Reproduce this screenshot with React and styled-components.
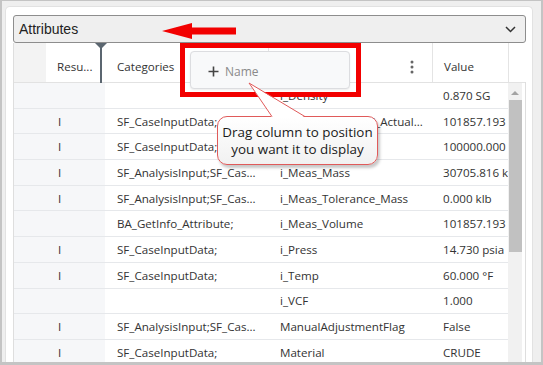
import React from "react";
import styled, { createGlobalStyle } from "styled-components";

const Global = createGlobalStyle`
  html, body { margin: 0; padding: 0; background: #efefef; }
  body { font-family: "Open Sans", "Noto Sans", sans-serif; }
  * { box-sizing: border-box; }
`;

const Frame = styled.div`
  position: relative;
  width: 543px;
  height: 365px;
  overflow: hidden;
  background: #efefef;
  border-style: solid;
  border-color: #c4c4c4;
  border-width: 1px 2px 3px 2px;
  padding: 5px 8px 0 3px;
`;

const Card = styled.div`
  background: #fff;
  border: 1px solid #e2e2e2;
  border-bottom: none;
  border-radius: 5px 5px 0 0;
  padding: 8px 6px 0 7px;
  height: 400px;
`;

const Select = styled.div`
  height: 28px;
  display: flex;
  align-items: center;
  justify-content: space-between;
  background: #efefef;
  border: 1px solid #8d8d8d;
  border-radius: 3px;
  padding: 0 9px 0 5px;
  font-family: "Liberation Sans", Arial, sans-serif;
  font-size: 14px;
  color: #222;
`;

const Grid = styled.div`
  border-left: 1px solid #dedede;
  border-right: 1px solid #dedede;
  font-size: 11.6px;
  color: #333;
`;

const COLS = "32px 59px 163px 164px 76px";

const HeaderRow = styled.div`
  position: relative;
  display: grid;
  grid-template-columns: ${COLS} 17px;
  height: 40px;
  border-bottom: 1px solid #e2e2e2;
`;

const HeadCell = styled.div`
  display: flex;
  align-items: center;
  padding: 8px ${(p) => (p.$menu ? "18px" : "8px")} 0 ${(p) => p.$pad || 11}px;
  justify-content: ${(p) => (p.$menu ? "flex-end" : "flex-start")};
  background: ${(p) => (p.$gray ? "#f3f3f3" : "#fff")};
  border-left: ${(p) => (p.$line ? "1px solid #e4e4e4" : "none")};
  white-space: nowrap;
  overflow: hidden;
  color: #333;
`;

const DragMark = styled.div`
  position: absolute;
  left: 86px;
  top: 0;
  width: 2px;
  height: 40px;
  background: #5b6670;
  &::before {
    content: "";
    position: absolute;
    left: -5px;
    top: 0;
    border-left: 6px solid transparent;
    border-right: 6px solid transparent;
    border-top: 6px solid #5b6670;
  }
`;

const Body = styled.div`
  display: flex;
`;

const Rows = styled.div`
  width: 494px;
`;

const Row = styled.div`
  display: grid;
  grid-template-columns: ${COLS};
  height: 25.7px;
  border-bottom: 1px solid #e6e8eb;
`;

const Cell = styled.div`
  display: flex;
  align-items: center;
  padding: 0 0 0 ${(p) => p.$pad || 12}px;
  background: ${(p) => (p.$gray ? "#f6f7f9" : "#fff")};
  white-space: nowrap;
  overflow: hidden;
`;

const Scroll = styled.div`
  position: relative;
  width: 14px;
  background: #f1f1f1;
  height: 290px;
`;

const UpArrow = styled.div`
  position: absolute;
  left: 3px;
  top: 8px;
  border-left: 4px solid transparent;
  border-right: 4px solid transparent;
  border-bottom: 4px solid #a3a3a3;
`;

const Thumb = styled.div`
  position: absolute;
  left: 1px;
  right: 0;
  top: 17px;
  height: 152px;
  background: #c1c1c1;
`;

const Gap = styled.div`
  width: 3px;
  background: #fff;
`;

const RedBox = styled.div`
  position: absolute;
  left: 178px;
  top: 42px;
  width: 181px;
  height: 54px;
  border: 5px solid #f20000;
`;

const Ghost = styled.div`
  position: absolute;
  left: 188px;
  top: 50px;
  width: 160px;
  height: 38px;
  background: #f8f9fa;
  border: 1px solid #dcdde0;
  border-radius: 4px;
  box-shadow: 0 1px 2px rgba(0, 0, 0, 0.08);
  display: flex;
  align-items: center;
  gap: 6px;
  padding: 2px 0 0 17px;
  font-size: 12px;
  color: #8a8a8a;
`;

const Callout = styled.div`
  position: absolute;
  left: 215px;
  top: 115px;
  width: 161px;
  height: 49px;
  border: 1px solid #e05a5a;
  border-radius: 10px;
  background: linear-gradient(#ffffff, #f1f1f1);
  box-shadow: 2px 3px 3px rgba(0, 0, 0, 0.22);
  display: flex;
  align-items: center;
  justify-content: center;
  text-align: center;
  font-size: 13.4px;
  line-height: 17px;
  color: #1a1a1a;
`;

const Tail = styled.svg`
  position: absolute;
  left: 243px;
  top: 80px;
  overflow: visible;
`;

const Arrow = styled.svg`
  position: absolute;
  left: 158px;
  top: 20px;
`;

const rows = [
  ["", "", "i_Density", "0.870 SG"],
  ["I", "SF_CaseInputData;", "i_Meas_Gross_Vol_Actual...", "101857.193"],
  ["I", "SF_CaseInputData;", "i_Meas_Gross_Vol", "100000.000"],
  ["I", "SF_AnalysisInput;SF_Cas...", "i_Meas_Mass", "30705.816 klb"],
  ["I", "SF_AnalysisInput;SF_Cas...", "i_Meas_Tolerance_Mass", "0.000 klb"],
  ["", "BA_GetInfo_Attribute;", "i_Meas_Volume", "101857.193"],
  ["I", "SF_CaseInputData;", "i_Press", "14.730 psia"],
  ["I", "SF_CaseInputData;", "i_Temp", "60.000 °F"],
  ["", "", "i_VCF", "1.000"],
  ["I", "SF_AnalysisInput;SF_Cas...", "ManualAdjustmentFlag", "False"],
  ["I", "SF_CaseInputData;", "Material", "CRUDE"],
];

export default function App() {
  return (
    <>
      <Global />
      <Frame>
        <Card>
          <Select>
            <span>Attributes</span>
            <svg width="11" height="7" viewBox="0 0 11 7">
              <path d="M1 1l4.5 4.5L10 1" fill="none" stroke="#333" strokeWidth="1.5" />
            </svg>
          </Select>
          <Grid>
            <HeaderRow>
              <HeadCell $gray />
              <HeadCell>Resu...</HeadCell>
              <HeadCell $pad={12}>Categories</HeadCell>
              <HeadCell $line $menu>
                <svg width="4" height="14" viewBox="0 0 4 14">
                  <circle cx="2" cy="2" r="1.5" fill="#666" />
                  <circle cx="2" cy="7" r="1.5" fill="#666" />
                  <circle cx="2" cy="12" r="1.5" fill="#666" />
                </svg>
              </HeadCell>
              <HeadCell $line>Value</HeadCell>
              <HeadCell $line />
              <DragMark />
            </HeaderRow>
            <Body>
              <Rows>
                {rows.map((r, i) => (
                  <Row key={i}>
                    <Cell $gray />
                    <Cell $gray>{r[0]}</Cell>
                    <Cell>{r[1]}</Cell>
                    <Cell>{r[2]}</Cell>
                    <Cell $pad={11}>{r[3]}</Cell>
                  </Row>
                ))}
              </Rows>
              <Scroll>
                <UpArrow />
                <Thumb />
              </Scroll>
              <Gap />
            </Body>
          </Grid>
        </Card>

        <Arrow width="78" height="20" viewBox="0 0 78 20">
          <polygon points="2,10 32,2 32,6.5 76,6.5 76,13.5 32,13.5 32,18" fill="#f20000" />
        </Arrow>

        <RedBox />
        <Ghost>
          <svg width="11" height="11" viewBox="0 0 11 11">
            <path d="M5.5 0.5v10M0.5 5.5h10" stroke="#444" strokeWidth="1.6" />
          </svg>
          <span>Name</span>
        </Ghost>

        <Callout>
          Drag column to position
          <br />
          you want it to display
        </Callout>
        <Tail width="60" height="37" viewBox="0 0 60 37">
          <polygon points="4,2 27,36.5 60,36.5" fill="#ffffff" />
          <polyline points="27,35.6 4,2 60,35.6" fill="none" stroke="#e05a5a" strokeWidth="1" />
        </Tail>
      </Frame>
    </>
  );
}
